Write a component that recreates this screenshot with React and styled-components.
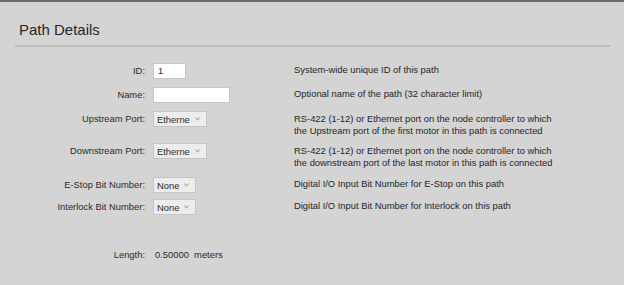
import React from 'react'
import styled, { createGlobalStyle } from 'styled-components'

const Global = createGlobalStyle`
  html, body { margin: 0; padding: 0; background: #d4d4d4; }
  body { font-family: "Liberation Sans", Arial, sans-serif; color: #2a2a2a; }
`

const Page = styled.div`
  width: 624px;
  height: 285px;
  background: #d4d4d4;
  border-top: 2px solid #6b6b6b;
  box-sizing: border-box;
  overflow: hidden;
`

const Header = styled.div`
  margin: 0 14px 0 15px;
  padding: 19px 0 6px 4px;
  border-bottom: 2px solid #bcbcbc;
`

const Title = styled.h2`
  margin: 0;
  font-size: 15px;
  font-weight: normal;
  color: #262626;
  line-height: 18px;
`

const Form = styled.div`
  display: grid;
  grid-template-columns: 145px 133px 1fr;
  column-gap: 8px;
  padding-top: 16px;
  font-size: 9.4px;
`

const Label = styled.div`
  text-align: right;
  height: ${p => p.h}px;
  margin-top: ${p => p.mt || 0}px;
  line-height: 16px;
  white-space: nowrap;
`

const Cell = styled.div`
  height: ${p => p.h}px;
  margin-top: ${p => p.mt || 0}px;
`

const Desc = styled.div`
  height: ${p => p.h}px;
  line-height: 12px;
  padding-top: ${p => p.pt || 2}px;
  box-sizing: border-box;
  color: #262626;
`

const TextBox = styled.div`
  width: ${p => p.w}px;
  height: 16px;
  box-sizing: border-box;
  background: #fff;
  border: 1px solid #c6c6c6;
  padding: 0 4px;
  line-height: 14px;
`

const Select = styled.div`
  width: ${p => p.w}px;
  height: 16px;
  box-sizing: border-box;
  background: #ededed;
  border: 1px solid #c4c4c4;
  display: flex;
  align-items: center;
  padding-left: 3px;
  overflow: hidden;
  white-space: nowrap;
`

const SelText = styled.span`
  flex: 1;
  overflow: hidden;
`

const Chevron = styled.svg`
  width: 5px;
  height: 4px;
  margin: 0 6px 0 2px;
  flex: none;
`

const Value = styled.div`
  margin-top: ${p => p.mt || 0}px;
  line-height: 16px;
  padding-left: 2px;
  white-space: nowrap;
`

const Drop = ({ value, w }) => (
  <Select w={w}>
    <SelText>{value}</SelText>
    <Chevron viewBox="0 0 5 4">
      <path d="M0.5 0.5 L2.5 3.2 L4.5 0.5" fill="none" stroke="#8a8a8a" strokeWidth="0.9" />
    </Chevron>
  </Select>
)

const rows = [
  { label: 'ID:', ctl: <TextBox w={33}>1</TextBox>, desc: ['System-wide unique ID of this path'], h: 24, pt: 1 },
  { label: 'Name:', ctl: <TextBox w={77} />, desc: ['Optional name of the path (32 character limit)'], h: 24, pt: 1 },
  { label: 'Upstream Port:', ctl: <Drop value="Etherne" w={54} />, desc: ['RS-422 (1-12) or Ethernet port on the node controller to which', 'the Upstream port of the first motor in this path is connected'], h: 32, pt: 0 },
  { label: 'Downstream Port:', ctl: <Drop value="Etherne" w={54} />, desc: ['RS-422 (1-12) or Ethernet port on the node controller to which', 'the downstream port of the last motor in this path is connected'], h: 34, pt: 0 },
  { label: 'E-Stop Bit Number:', ctl: <Drop value="None" w={43} />, desc: ['Digital I/O Input Bit Number for E-Stop on this path'], h: 22, pt: 1 },
  { label: 'Interlock Bit Number:', ctl: <Drop value="None" w={43} />, desc: ['Digital I/O Input Bit Number for Interlock on this path'], h: 22, pt: 1 },
]

export default function App() {
  return (
    <Page>
      <Global />
      <Header>
        <Title>Path Details</Title>
      </Header>
      <Form>
        {rows.map(r => (
          <React.Fragment key={r.label}>
            <Label h={r.h}>{r.label}</Label>
            <Cell h={r.h}>{r.ctl}</Cell>
            <Desc h={r.h} pt={r.pt}>
              {r.desc.map(d => <div key={d}>{d}</div>)}
            </Desc>
          </React.Fragment>
        ))}
        <Label h={16} mt={26}>Length:</Label>
        <Value mt={26}>0.50000&nbsp; meters</Value>
        <div />
      </Form>
    </Page>
  )
}
